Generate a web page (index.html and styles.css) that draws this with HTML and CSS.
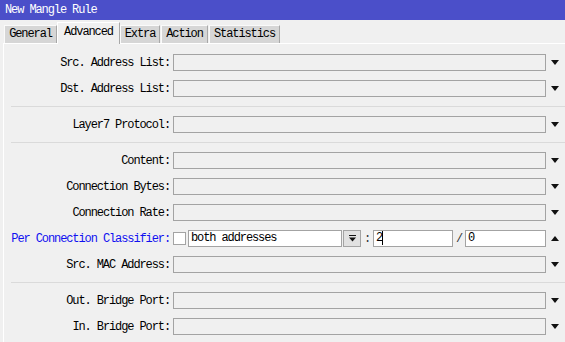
FILE: index.html
```html
<!DOCTYPE html>
<html>
<head>
<meta charset="utf-8">
<link rel="stylesheet" href="styles.css">
</head>
<body>
<div class="window">
  <div class="titlebar">New Mangle Rule</div>
  <div class="tabs">
    <div class="tab t-general">General</div>
    <div class="tab active t-advanced">Advanced</div>
    <div class="tab t-extra">Extra</div>
    <div class="tab t-action">Action</div>
    <div class="tab t-stats">Statistics</div>
  </div>
  <div class="panel">
    <div class="row"><div class="label">Src. Address List:</div><div class="field"></div><div class="arrow down"></div></div>
    <div class="row"><div class="label">Dst. Address List:</div><div class="field"></div><div class="arrow down"></div></div>
    <div class="sep"></div>
    <div class="row"><div class="label">Layer7 Protocol:</div><div class="field"></div><div class="arrow down"></div></div>
    <div class="sep"></div>
    <div class="row"><div class="label">Content:</div><div class="field"></div><div class="arrow down"></div></div>
    <div class="row"><div class="label">Connection Bytes:</div><div class="field"></div><div class="arrow down"></div></div>
    <div class="row"><div class="label">Connection Rate:</div><div class="field"></div><div class="arrow down"></div></div>
    <div class="row"><div class="label blue">Per Connection Classifier:</div>
      <div class="pcc">
        <div class="check"></div>
        <div class="combo">both addresses</div>
        <div class="dropbtn"><svg width="9" height="9" viewBox="0 0 9 9"><rect x="1" y="1" width="7" height="1" fill="#111"/><path d="M1 3.5 H8 L4.5 7.5 Z" fill="#111"/></svg></div>
        <div class="sepchar">:</div>
        <div class="wfield f2"><span class="caret">2</span></div>
        <div class="sepchar">/</div>
        <div class="wfield f3">0</div>
      </div>
      <div class="arrow up"></div></div>
    <div class="row"><div class="label">Src. MAC Address:</div><div class="field"></div><div class="arrow down"></div></div>
    <div class="sep"></div>
    <div class="row"><div class="label">Out. Bridge Port:</div><div class="field"></div><div class="arrow down"></div></div>
    <div class="row"><div class="label">In. Bridge Port:</div><div class="field"></div><div class="arrow down"></div></div>
  </div>
</div>
</body>
</html>
```
FILE: styles.css
```css
* { box-sizing: border-box; }
html, body { margin: 0; padding: 0; }
body {
  background: #f0f0f0;
  font-family: "Liberation Mono", "DejaVu Sans Mono", monospace;
  font-size: 12px;
  letter-spacing: -1.1px;
  color: #000;
  width: 565px;
  height: 342px;
  overflow: hidden;
}
.titlebar {
  height: 20px;
  background: #4b4fc9;
  color: #fff;
  padding-left: 5px;
  line-height: 20px;
}
.tabs {
  height: 23px;
  display: flex;
  align-items: flex-end;
  padding-left: 4px;
}
.tab {
  height: 18px;
  background: #d6d6d6;
  border-left: 1px solid #fafafa;
  border-top: 1px solid #fafafa;
  border-right: 1px solid #a8a8a8;
  text-align: center;
  line-height: 17px;
  margin-right: 1px;
}
.tab.active {
  height: 22px;
  background: #f0f0f0;
  margin-bottom: -1px;
  position: relative;
  line-height: 18px;
  border-left: 1px solid #ffffff;
  border-top: 1px solid #ffffff;
}
.t-general { width: 53px; margin-right: 0; }
.t-advanced { width: 63px; margin-right: 0; }
.t-extra { width: 40px; }
.t-action { width: 47px; }
.t-stats { width: 71px; }
.panel {
  margin-left: 3px;
  border-left: 1px solid #ffffff;
  border-top: 1px solid #ffffff;
  padding-top: 10px;
  display: flex;
  flex-direction: column;
  gap: 9px;
  height: 299px;
}
.row {
  display: grid;
  grid-template-columns: 166px 373px 9px;
  column-gap: 3px;
  align-items: center;
  height: 17px;
}
.row .arrow { margin-left: 2px; }
.label {
  text-align: right;
  white-space: nowrap;
}
.label.blue { color: #1010f0; }
.field {
  height: 17px;
  border: 1px solid #a3a3a3;
  background: #f0f0f0;
}
.arrow {
  width: 0; height: 0;
  border-left: 4.5px solid transparent;
  border-right: 4.5px solid transparent;
}
.arrow.down { border-top: 5px solid #111; }
.arrow.up { border-bottom: 5px solid #111; }
.sep {
  height: 1px;
  background: #dadada;
  margin-left: 7px;
}
.pcc {
  display: flex;
  align-items: center;
  height: 17px;
}
.check {
  width: 13px;
  height: 13px;
  border: 1px solid #a3a3a3;
  background: #fff;
  margin-right: 2px;
}
.combo {
  width: 154px;
  height: 17px;
  border: 1px solid #a3a3a3;
  background: #fff;
  padding-left: 2px;
  line-height: 15px;
  white-space: nowrap;
}
.dropbtn {
  width: 18px;
  height: 17px;
  margin-left: 1px;
  border: 1px solid #a3a3a3;
  background: #e1e1e1;
  display: flex;
  align-items: center;
  justify-content: center;
}
.sepchar {
  width: 12px;
  text-align: center;
  color: #333;
}
.wfield {
  height: 17px;
  border: 1px solid #a3a3a3;
  background: #fff;
  padding-left: 2px;
  line-height: 15px;
}
.f2 { width: 80px; }
.f3 { width: 81px; }
.caret { border-right: 1px solid #000; }
```
